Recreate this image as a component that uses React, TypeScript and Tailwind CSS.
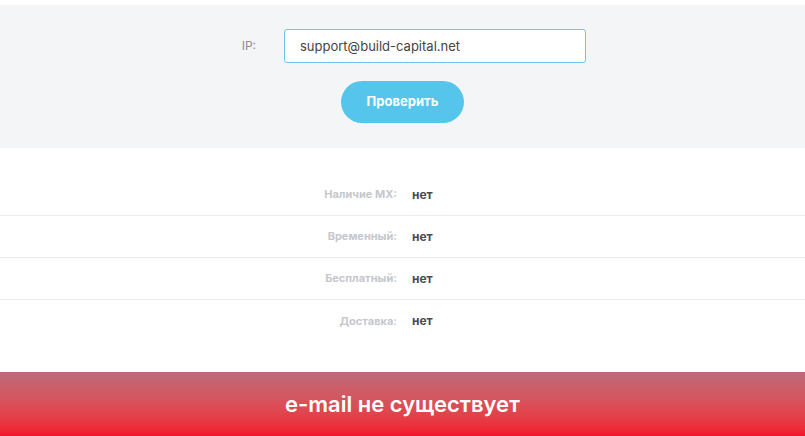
const rows = [
  { label: "Наличие MX:", value: "нет" },
  { label: "Временный:", value: "нет" },
  { label: "Бесплатный:", value: "нет" },
  { label: "Доставка:", value: "нет" },
];

export default function App() {
  return (
    <div
      className="min-h-screen bg-white pt-[5px]"
      style={{ fontFamily: "Inter, 'Noto Sans', sans-serif" }}
    >
      <div className="bg-[#f4f5f7] pt-[24px] pb-[25px]">
        <div className="flex justify-center items-center gap-[28px]">
          <label className="w-[37px] text-right text-[12px] text-[#8a8c91]">IP:</label>
          <input
            className="w-[302px] h-[34px] rounded-[3px] border border-[#6ec6e6] bg-white px-[15px] text-[13px] text-[#444] outline-none"
            defaultValue="support@build-capital.net"
          />
        </div>
        <div className="flex justify-center mt-[18px]">
          <button className="w-[123px] h-[42px] rounded-full bg-[#55c5ec] text-white text-[13px] font-bold">
            Проверить
          </button>
        </div>
      </div>

      <div className="pt-[26px] pb-[30px]">
        {rows.map((r, i) => (
          <div
            key={r.label}
            className={`flex items-center h-[42px] ${i < rows.length - 1 ? "border-b border-[#ebebeb]" : ""}`}
          >
            <div className="w-[397px] text-right text-[11px] font-bold text-[#c5c7cc]">{r.label}</div>
            <div className="pl-[15px] text-[12px] font-bold text-[#4a4c52]">{r.value}</div>
          </div>
        ))}
      </div>

      <div className="h-[64px] flex items-center justify-center bg-gradient-to-b from-[#bd6a7a] to-[#f3112a]">
        <span className="text-white text-[22px] font-semibold">e-mail не существует</span>
      </div>
    </div>
  );
}
